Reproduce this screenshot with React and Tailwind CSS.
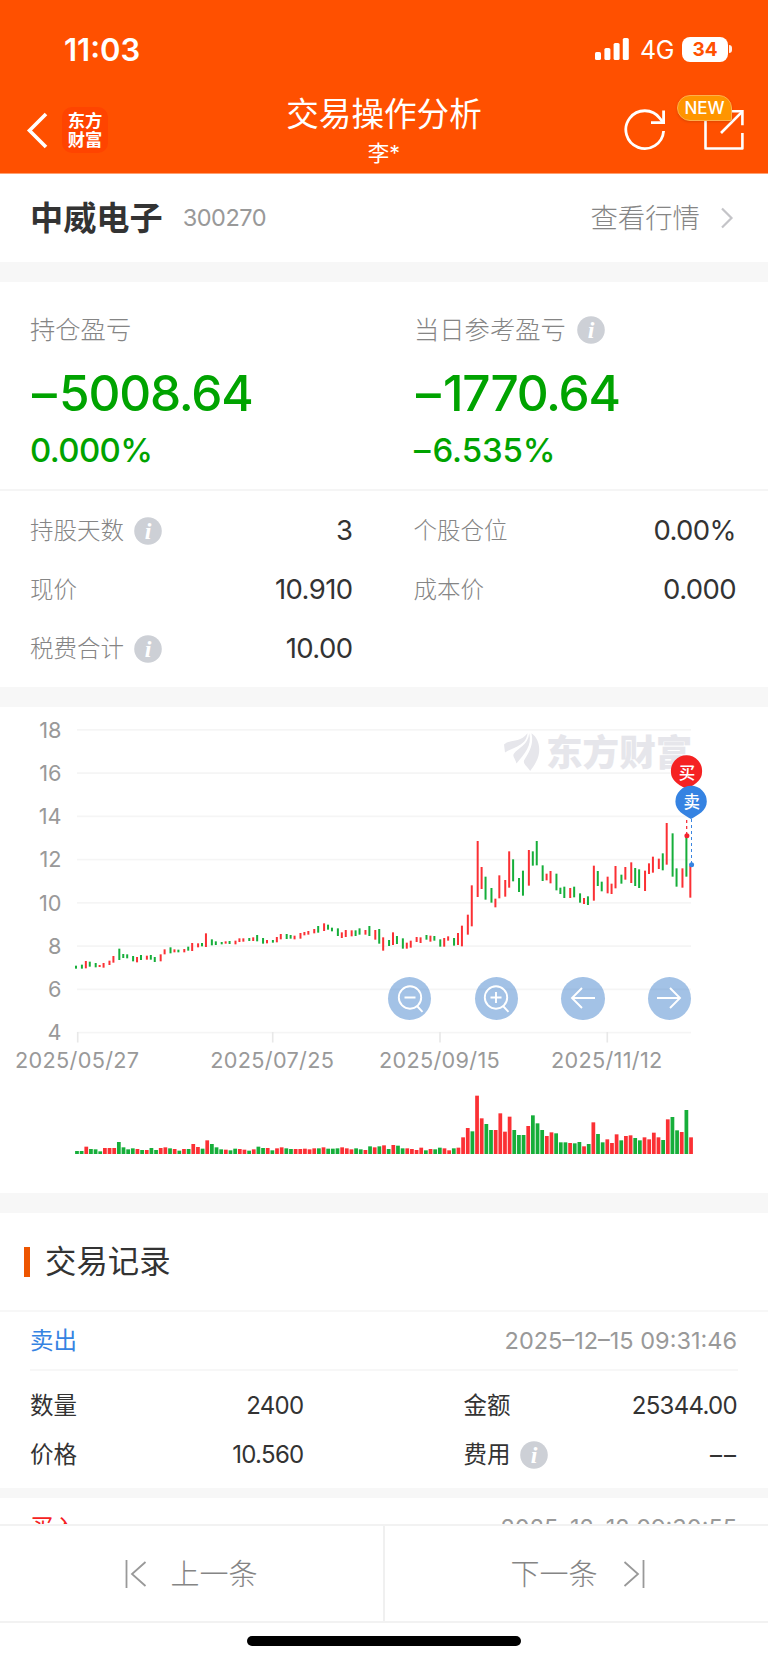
import React from "react";

const SANS = "font-['Inter','Noto_Sans_CJK_SC',sans-serif]";

/* One entry per trading day: colour, high and low in thirds of a pixel below the panel origin. */
const CANDLES =
  "g797-806 g794-806 r783-805 g785-800 g789-802 r795-801 r789-803 r782-795 r768-788 g746-780 g762-774 g763-775 g768-784 r771-787 g765-780 r767-779 g765-779 g771-786 r763-784 r748-763 g742-760 r748-757 g749-757 r747-757 g740-752 r729-753 r730-742 g729-739 r700-741 g718-736 g724-735 g726-733 r724-731 g723-732 r722-733 r715-726 r715-725 g714-723 r712-723 g705-724 g714-731 r720-730 g720-728 r711-727 r702-718 g702-717 g705-716 r707-718 r699-716 r696-706 r693-704 r687-700 g678-698 r670-693 g674-689 g683-694 g685-708 r697-714 r690-711 r691-709 g691-708 g685-704 r690-704 g678-708 r690-719 g687-731 r712-752 g720-738 r697-735 g708-732 g715-746 r728-746 r722-743 r711-726 r712-729 g705-719 r707-725 g708-722 g718-740 r714-740 r709-722 g714-737 r699-735 r677-739 r644-704 r556-679 r423-591 r501-567 g530-599 g564-608 r596-622 r526-595 r540-590 r454-563 g478-544 g534-576 g512-587 r450-557 g454-497 g423-496 g496-543 r521-541 r513-550 g521-571 g563-582 g560-594 r564-594 g560-592 g580-608 r594-612 g589-615 r497-602 g513-558 g545-574 r530-580 r551-582 r498-565 g524-551 r501-539 r487-549 g504-558 g508-564 r512-573 r490-522 r470-518 r476-507 g460-511 r369-494 g400-530 g505-560 r505-563 g408-530 r497-593"
    .split(" ")
    .map((s) => [s[0], ...s.slice(1).split("-").map(Number)]);

const VOLUMES =
  "g9 g9 r22 g15 g14 g8 r18 r18 r18 g36 g20 g14 g17 r15 g12 r12 g18 g12 r18 r20 g17 r15 g10 r15 g15 r30 r21 g16 r41 g30 g20 g14 r13 g11 g16 r15 r13 g10 r14 g22 g18 r18 g11 r17 r20 g17 g15 r15 r15 r16 r14 r17 g17 r20 g16 g16 g17 r20 r17 r14 g17 g14 r12 g23 r20 g23 r26 g15 r27 g25 g17 r17 r15 r12 r19 g11 r15 g14 g19 r17 r11 g17 r19 r50 r78 g68 r175 r107 g90 g72 r72 r122 r67 r112 g72 g57 g57 r84 g116 g92 g72 r54 r65 g62 g35 g35 r33 g32 g36 r23 g30 r95 g60 g35 r44 r33 r59 g41 r54 r56 g48 g41 r50 r44 r64 r50 g42 r104 g111 g71 r66 g132 r50"
    .split(" ")
    .map((s) => [s[0], Number(s.slice(1))]);

const COLOR = { r: "#fb3034", g: "#16ae3a" };

function Info() {
  return (
    <svg className="size-[28px] shrink-0" viewBox="0 0 28 28">
      <circle cx="14" cy="14" r="13.8" fill="#cdd0d6" />
      <text x="14" y="21.6" textAnchor="middle" fill="#fff" className="font-['Liberation_Serif',serif] text-[24px] font-bold italic">i</text>
    </svg>
  );
}

function Header() {
  return (
    <header className="h-[174px] shrink-0 border-b border-[#ffa070] bg-[#ff5000] text-white">
      <div className="flex h-[98px] items-center justify-between pl-[64px] pr-[36px]">
        <span className="text-[31px] font-semibold leading-none">11:03</span>
        <div className="flex items-center">
          <svg className="h-[24px] w-[35px]" viewBox="0 0 35 24" fill="#fff">
            <rect x="0" y="15" width="6" height="8" rx="1.6" />
            <rect x="9.4" y="11" width="6" height="12" rx="1.6" />
            <rect x="18.6" y="6" width="6" height="17" rx="1.6" />
            <rect x="27.8" y="1" width="6" height="22" rx="1.6" />
          </svg>
          <span className="ml-[10px] mt-[3px] w-[33px] text-[25px] leading-none tracking-[-0.5px]">4G</span>
          <div className="ml-[9px] flex h-[25px] w-[46px] items-center justify-center rounded-[8px] bg-white text-[19px] font-bold leading-none text-[#ff5000]">34</div>
          <div className="ml-[1px] h-[8px] w-[3px] rounded-r-full bg-white/90" />
        </div>
      </div>
      <div className="grid h-[75px] grid-cols-3">
        <div className="flex h-[64px] items-center pl-[26px]">
          <svg className="h-[40px] w-[24px]" viewBox="0 0 24 40">
            <path d="M20 4 L3.5 20.5 L20 37" fill="none" stroke="#fff" strokeWidth="3.6" />
          </svg>
          <div className="ml-[12px] flex size-[46px] flex-col items-center justify-center rounded-[10px] bg-[#ff4400] text-[17.3px] font-bold leading-[19.5px]">
            <span>东方</span>
            <span>财富</span>
          </div>
        </div>
        <div className="flex flex-col items-center">
          <h1 className="whitespace-nowrap text-[32.6px] leading-[33px]">交易操作分析</h1>
          <p className="mt-[10px] text-[21.5px] leading-[24px]">李*</p>
        </div>
        <div className="relative flex items-start justify-end gap-[35px] pr-[22px] pt-[10px]">
          <svg className="h-[44px] w-[44px]" viewBox="623 108 44 44" fill="none" stroke="#fff" strokeWidth="2.8">
            <path d="M663.6 131 A18.9 18.9 0 1 1 660 118.5 L663 122.4" />
            <path d="M663.6 110.5 V122.6 H651" />
          </svg>
          <svg className="h-[44px] w-[44px]" viewBox="702 108 44 44" fill="none" stroke="#fff" strokeWidth="2.6">
            <path d="M728 111.3 H742.4 V125.3" />
            <path d="M742.4 133 V148.5 H705.5 V118" strokeLinejoin="round" />
            <path d="M742 111.8 L721 133" />
          </svg>
          <span className="absolute left-[165px] top-[-3px] flex h-[26px] w-[55px] items-center justify-center rounded-[13px] rounded-br-[2px] border border-[#ffb04a] bg-[#ff9500] text-[17px] font-medium leading-none shadow-sm">NEW</span>
        </div>
      </div>
    </header>
  );
}

function Summary({ label, info, value, percent, percentNegative }) {
  return (
    <div className="flex flex-col">
      <div className="flex h-[34px] items-center gap-[11px] text-[25.3px] font-light leading-none text-[#858585]">
        {label}
        {info && <Info />}
      </div>
      <div className="mt-[19px] flex pl-[2px] text-[49.5px] font-medium leading-[54px] tracking-[-1.2px]">
        <span className="w-[27px]">–</span>
        {value}
      </div>
      <div className="mt-[11px] flex text-[33px] font-medium leading-[38px] tracking-[-0.65px]">
        {percentNegative && <span className="w-[18.5px]">–</span>}
        <span className={percentNegative ? "tracking-[-0.1px]" : ""}>{percent}</span>
      </div>
    </div>
  );
}

function Stat({ label, info, value }) {
  return (
    <div className="flex h-[59px] items-center justify-between">
      <div className="flex items-center gap-[10px] text-[23.5px] font-light leading-none text-[#858585]">
        {label}
        {info && <Info />}
      </div>
      <span className="text-[27.5px] leading-none tracking-[-0.6px] text-[#333]">{value}</span>
    </div>
  );
}

function RecordCell({ label, info, value }) {
  return (
    <div className="flex h-[49px] items-center justify-between text-[#333]">
      <div className="flex items-center gap-[9px] text-[23.5px] leading-none">
        {label}
        {info && <Info />}
      </div>
      <span className="text-[24px] leading-none tracking-[-0.7px]">{value}</span>
    </div>
  );
}

function Chart() {
  const levels = [18, 16, 14, 12, 10, 8, 6, 4];
  const dates = [
    [77.7, "2025/05/27"],
    [272.7, "2025/07/25"],
    [440, "2025/09/15"],
    [607.3, "2025/11/12"],
  ];
  return (
    <svg className="block h-[486px] w-[768px]" viewBox="0 707 768 486">
      {levels.map((v, i) => (
        <g key={v}>
          <rect x="77" y={729 + i * 43.25} width="614" height="1.7" fill="#f5f5f5" />
          <text x="61.5" y={737.5 + i * 43.25} textAnchor="end" fontSize="21.7" fill="#999">{v}</text>
        </g>
      ))}
      {dates.map(([x, d]) => (
        <g key={d}>
          <rect x={x - 0.8} y="1032" width="1.6" height="10.5" fill="#e8e8e8" />
          <text x={x - 0.5} y="1068" textAnchor="middle" fontSize="21.7" letterSpacing="0.3" fill="#999">{d}</text>
        </g>
      ))}
      <g fill="#e6e6eb">
        <path d="M504 744.5 C510 739 520 743 527.5 733.2 C526 746 515 746 505 752.6 Z" />
        <path d="M529.3 733.2 C532 746 525 753 516.5 763.5 C515 758 512 756 514 753.5 C518 748 528 745 529.3 733.2 Z" />
        <path d="M531.5 733.2 C540 739 541.5 752 536 762 C534 766 532 768 530.2 771 C527 766 523 764 524 760.5 C529 752 534 745 531.5 733.2 Z" />
        <text x="546" y="765.5" fontSize="36.6" fontWeight="900">东方财富</text>
      </g>
      {CANDLES.map(([c, a, b], i) => (
        <rect key={i} x={75 + 1.969 * Math.round(2.3636 * i + 0.3)} y={700 + a / 3} width="2" height={(b - a) / 3} fill={COLOR[c]} />
      ))}
      {VOLUMES.map(([c, h], i) => (
        <rect key={i} x={75.1 + i * 4.652} y={1154 - h / 3} width="3.75" height={h / 3} fill={COLOR[c]} />
      ))}
      <path d="M686.7 820 V834" stroke="#f5222d" strokeWidth="1.2" strokeDasharray="3 3" />
      <path d="M691.5 819 V864" stroke="#3a85e0" strokeWidth="1" strokeDasharray="3 3" />
      <circle cx="686.9" cy="835.7" r="2.5" fill="#f5222d" />
      <circle cx="691.6" cy="864.7" r="2.5" fill="#3583e2" />
      <path d="M671 772.6 A15.6 15.6 0 1 1 702 772.6 Q702 782 686.5 789 Q671 782 671 772.6 Z" fill="#f52222" />
      <text x="687" y="778.8" textAnchor="middle" fontSize="16.5" fontWeight="500" fill="#fff">买</text>
      <path d="M675.4 801.5 A15.6 15.6 0 1 1 706.8 801.5 C706.8 810.5 698 815 691 819 C684 815 675.4 810.5 675.4 801.5 Z" fill="#3583e2" />
      <text x="691.8" y="807.8" textAnchor="middle" fontSize="16.5" fontWeight="500" fill="#fff">卖</text>
    </svg>
  );
}

function ToolButton({ children }) {
  return (
    <button className="flex size-[43.4px] items-center justify-center rounded-full bg-[#3f80cb]/48">
      <svg className="size-[30px] overflow-visible" viewBox="0 0 30 30" fill="none" stroke="#fff" strokeWidth="1.9">
        {children}
      </svg>
    </button>
  );
}

export default function App() {
  return (
    <div className={`relative flex h-[1663px] w-[768px] flex-col overflow-hidden bg-white ${SANS}`}>
      <Header />

      <div className="flex h-[88px] shrink-0 items-center pl-[30px] pr-[34px]">
        <span className="pt-[2px] text-[33.2px] font-bold leading-none text-[#333]">中威电子</span>
        <span className="ml-[20px] text-[23.5px] leading-none tracking-[-0.5px] text-[#999]">300270</span>
        <span className="ml-auto pt-[2px] text-[27.4px] font-light leading-none text-[#858585]">查看行情</span>
        <svg className="ml-[20px] h-[22px] w-[14px]" viewBox="0 0 14 22">
          <path d="M2 1.5 L11.5 11 L2 20.5" fill="none" stroke="#c4c4c8" strokeWidth="2.2" />
        </svg>
      </div>
      <div className="h-[20px] shrink-0 bg-[#f7f7f7]" />

      <section className="h-[405px] shrink-0">
        <div className="grid h-[209px] grid-cols-[384px_1fr] border-b-2 border-[#f5f5f5] pl-[30px] pt-[31px] text-[#00a300]">
          <Summary label="持仓盈亏" value="5008.64" percent="0.000%" />
          <Summary label="当日参考盈亏" info value="1770.64" percent="6.535%" percentNegative />
        </div>
        <div className="grid grid-cols-2 gap-x-[61px] pl-[30px] pr-[32px] pt-[10px]">
          <Stat label="持股天数" info value="3" />
          <Stat label="个股仓位" value="0.00%" />
          <Stat label="现价" value="10.910" />
          <Stat label="成本价" value="0.000" />
          <Stat label="税费合计" info value="10.00" />
        </div>
      </section>
      <div className="h-[20px] shrink-0 bg-[#f7f7f7]" />

      <section className="relative h-[486px] shrink-0">
        <Chart />
        <div className="absolute left-[388px] top-[269.5px] flex gap-[43.2px]">
          <ToolButton>
            <circle cx="15" cy="14.5" r="11.2" />
            <path d="M9.5 14.5 H20.5 M22 23 L27.5 28.8" />
          </ToolButton>
          <ToolButton>
            <circle cx="15" cy="14.5" r="11.2" />
            <path d="M9.5 14.5 H20.5 M15 9 V20 M22 23 L27.5 28.8" />
          </ToolButton>
          <ToolButton>
            <path d="M27 15 H4 M14 5 L4 15 L14 25" />
          </ToolButton>
          <ToolButton>
            <path d="M3 15 H26 M16 5 L26 15 L16 25" />
          </ToolButton>
        </div>
      </section>
      <div className="h-[20px] shrink-0 bg-[#f7f7f7]" />

      <section className="h-[311px] shrink-0 overflow-hidden">
        <div className="flex h-[99px] items-center border-b-2 border-[#f7f7f7] pl-[24px]">
          <div className="h-[30px] w-[6px] bg-[#ed5500]" />
          <h2 className="ml-[15px] pt-[3px] text-[31.4px] leading-none text-[#333]">交易记录</h2>
        </div>
        <article className="h-[176px]">
          <div className="mx-[30px] flex h-[59px] items-center justify-between border-b-2 border-[#f7f7f7] text-[23.5px] leading-none">
            <span className="text-[#3583e2]">卖出</span>
            <span className="mr-[1px] text-[#999]">2025–12–15 09:31:46</span>
          </div>
          <div className="grid grid-cols-[273.5px_273.5px] justify-between pl-[30px] pr-[31px] pt-[10px]">
            <RecordCell label="数量" value="2400" />
            <RecordCell label="金额" value="25344.00" />
            <RecordCell label="价格" value="10.560" />
            <RecordCell
              label="费用"
              info
              value={
                <span className="flex gap-[1px] pt-[1px] tracking-normal">
                  <span className="w-[13px]">–</span>
                  <span className="w-[13px]">–</span>
                </span>
              }
            />
          </div>
        </article>
        <div className="h-[10px] bg-[#f7f7f7]" />
        <article className="px-[30px]">
          <div className="flex h-[60px] items-center justify-between text-[23.5px] leading-none">
            <span className="text-[#f52222]">买入</span>
            <span className="mr-[1px] text-[#999]">2025–12–12 09:30:55</span>
          </div>
        </article>
      </section>

      <nav className="grid h-[99px] shrink-0 grid-cols-[385px_383px] border-y-2 border-[#f2f2f2] text-[29px] font-light leading-none text-[#858585]">
        <button className="flex items-center justify-center border-r-2 border-[#f0f0f0]">
          <svg className="mr-[23px] h-[28px] w-[22px]" viewBox="0 0 22 28" fill="none" stroke="#999" strokeWidth="1.8">
            <path d="M1.5 0 V28 M20.5 2 L7 14 L20.5 26" />
          </svg>
          <span className="pt-[1px]">上一条</span>
        </button>
        <button className="flex items-center justify-center pl-[2px]">
          <span className="pt-[1px]">下一条</span>
          <svg className="ml-[25px] h-[28px] w-[22px]" viewBox="0 0 22 28" fill="none" stroke="#999" strokeWidth="1.8">
            <path d="M20.5 0 V28 M1.5 2 L15 14 L1.5 26" />
          </svg>
        </button>
      </nav>
      <div className="flex justify-center pt-[13px]">
        <div className="h-[10px] w-[274px] rounded-full bg-black" />
      </div>
    </div>
  );
}
